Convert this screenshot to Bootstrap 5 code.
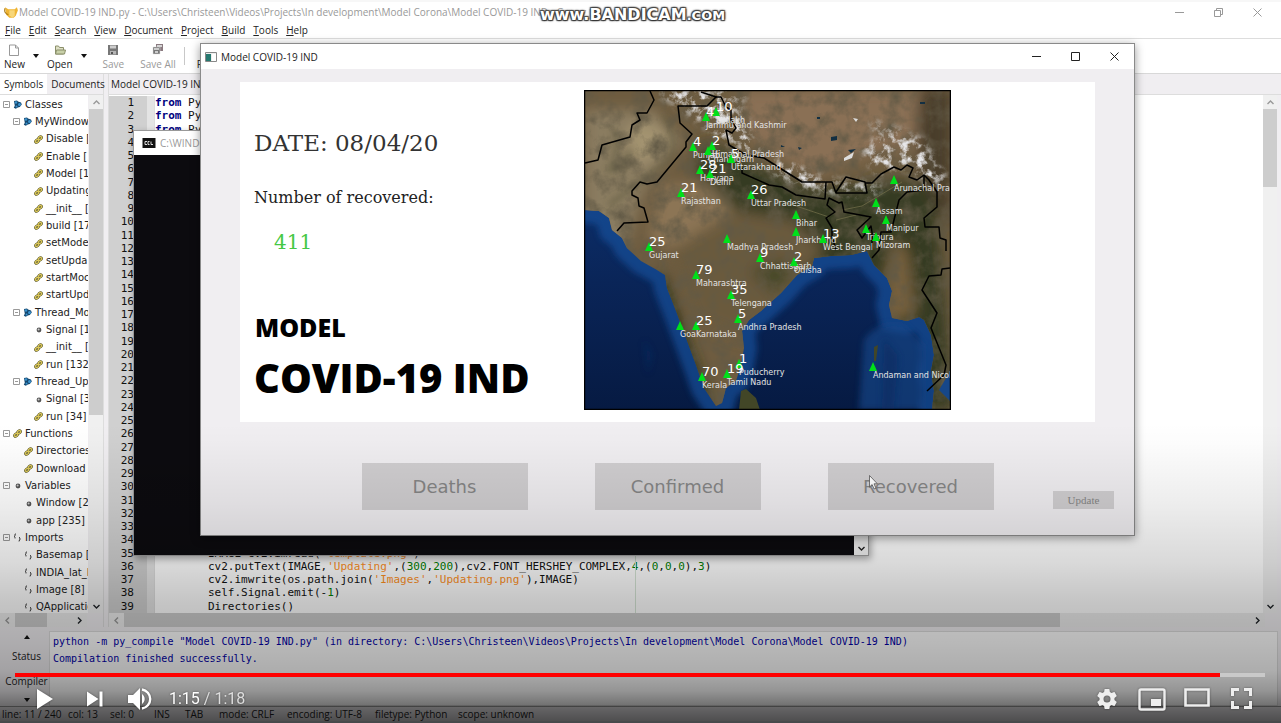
<!DOCTYPE html>
<html lang="en">
<head>
<meta charset="utf-8">
<meta name="viewport" content="width=device-width, initial-scale=1">
<title>Model COVID-19 IND</title>
<link rel="stylesheet" href="https://cdn.jsdelivr.net/npm/bootstrap@5.3.0/dist/css/bootstrap.min.css">
<style>
  :root { --ui: "Open Sans", "Noto Sans", sans-serif; --mono: "DejaVu Sans Mono", monospace; --chrome: #f0eef1; }
  body { font: 10px/14px var(--ui); color: #222; background: #fff; }
  button { font: inherit; color: inherit; background: none; border: 0; padding: 0; }
  svg { display: block; flex: none; }
  .stage { height: 100vh; min-height: 600px; }
  .faded { color: #999; }

  /* editor frame */
  .title-row { height: 22px; border-top: 2px solid #f7f7f7; }
  .menu-row { height: 17px; border-bottom: 1px solid #ddd; gap: 8px; padding-left: 5px; }
  .tool-row { height: 35px; border-bottom: 1px solid #d8d8d8; }
  .tool { display: flex; flex-direction: column; align-items: center; gap: 1px; line-height: 12px; }
  .tool svg { height: 14px; }
  .caret { border: 3px solid transparent; border-top: 4px solid #111; border-bottom: 0; height: 4px; }
  .caret.up { border-top: 0; border-bottom: 4px solid #111; }
  .work { background: var(--chrome); min-height: 0; }
  .side { width: 104px; border-right: 1px solid #ddd; }
  .tab-row { height: 21px; border-bottom: 1px solid #ddd; }
  .side-tab { height: 20px; padding: 0 4px; white-space: nowrap; }
  .side-tab.on { background: #fff; }
  .tree { width: 88px; padding-top: 1px; margin-bottom: -3px; font: 10px/14px "DejaVu Sans", sans-serif; white-space: nowrap; background: #fff; }
  .twig { gap: 3px; min-height: 0; }
  .lvl0 { padding-left: 3px; } .lvl1 { padding-left: 13px; } .lvl2 { padding-left: 34px; } .leaf1 { padding-left: 24px; }
  .vbar { width: 14px; background: #f0f0f0; }
  .vbar .knob { background: #cdcdcd; }
  .hbar { height: 14px; background: #eee; }
  .hbar .knob { background: #cdcdcd; }
  .arrow-box { width: 15px; height: 14px; display: flex; align-items: center; justify-content: center; }
  .doc { margin-left: 4px; border-left: 1px solid #ddd; }
  .doc .tab-row { padding-left: 2px; }
  .code { padding-top: 1px; font: 11px/13px var(--mono); background: #fff; color: #111; }
  .gutter { width: 38px; background: #d0d0d0; text-align: right; padding-right: 13px; }
  .fold { width: 8px; background: #e4e4e4; border-right: 1px solid #ddd; }
  .code-line { flex: 1 1 0; min-height: 0; display: flex; align-items: center; white-space: pre; }
  .gutter .code-line { justify-content: flex-end; }
  .edge-col { left: 526px; width: 1px; background: #d5e5d5; }
  .kw { color: #00007f; font-weight: bold; } .str { color: #ff901e; } .num { color: #007f00; }
  .msg { background: var(--chrome); height: 79px; padding-top: 4px; }
  .msg-tabs { width: 49px; }
  .msg-text { font: 10px/17px var(--mono); color: #0000a8; background: #fff; border: 1px solid #ddd; padding: 1px 3px; margin-right: 3px; white-space: pre; }
  .status-row { height: 17px; background: var(--chrome); border-top: 1px solid #999; border-bottom: 2px solid #dde3e8; display: grid; grid-template-columns: 66px 42px 44px 31px 34px 68px 88px 83px auto; padding-left: 2px; white-space: nowrap; line-height: 15px; }

  /* floating windows */
  .console { left: 133px; top: 130px; width: 736px; height: 426px; background: #fff; border: 1px solid #999; box-shadow: 2px 3px 7px #0005; }
  .console-screen { background: #0c0b0f; }
  .app { left: 200px; top: 43px; width: 935px; height: 493px; background: var(--chrome); border: 1px solid #8a8a8a; box-shadow: 0 2px 9px #0006; color: #222; }
  .app-title { height: 25px; background: #fff; line-height: 12px; }
  .sys { width: 39px; display: flex; justify-content: center; }
  .board { margin: 13px 39px 0; height: 340px; background: #fff; }
  .facts { width: 344px; padding-left: 14px; font-family: "DejaVu Serif", serif; color: #222; }
  .date { font-size: 23px; line-height: 24px; margin-top: 49px; color: #333; }
  .what { font-size: 16px; line-height: 20px; margin-top: 33px; }
  .count { font-size: 20px; line-height: 24px; margin-top: 22px; padding-left: 20px; color: #45c845; }
  .brand-a { font: 800 25px/30px "Open Sans", sans-serif; color: #000; margin-top: 58px; padding-left: 1px; }
  .brand-b { font: 800 40px/48px "Open Sans", sans-serif; color: #000; margin-top: 12px; white-space: nowrap; }
  .map { width: 367px; height: 320px; margin-top: 8px; }
  .choices { gap: 67px; padding: 41px 0 0 20px; }
  .choice { width: 166px; height: 47px; background: #d0ced0; color: #858585; font: 18px/24px "DejaVu Sans", sans-serif; }
  .update { right: 20px; bottom: 26px; width: 61px; height: 18px; background: #d0ced0; color: #858585; font: 11px/18px "Liberation Serif", serif; }
  .pointer { left: 869px; top: 475px; }
  .stamp { left: 540px; top: 6px; font: bold 16px/18px "DejaVu Sans", sans-serif; color: #fff; text-shadow: 1px 1px 1px #333, -1px -1px 1px #444, 1px -1px 1px #444, -1px 1px 1px #444, 0 0 3px #444; white-space: nowrap; }
  .stamp span { font-size: 13px; }

  /* video player */
  .shade { height: 300px; background: linear-gradient(to bottom, #0000 0, rgba(0,0,0,.01) 20px, rgba(0,0,0,.07) 80px, rgba(0,0,0,.15) 140px, rgba(0,0,0,.23) 180px, rgba(0,0,0,.28) 220px, rgba(0,0,0,.32) 248px, rgba(0,0,0,.42) 268px, rgba(0,0,0,.58) 285px, rgba(0,0,0,.68) 299px); }
  .player { color: #eee; padding: 0 16px 0 15px; }
  .track { height: 4px; border-radius: 0; background: #c9c9c9; }
  .track .progress-bar { background: #f00; }
  .keys { height: 46px; padding: 0 1px 2px; filter: drop-shadow(0 0 1px #0006); }
  .time { font: 16px/20px Roboto, sans-serif; margin-left: 17px; color: #ddd; }
  .time b { font-weight: 400; color: #fff; }
  .key { width: 45px; display: flex; justify-content: center; }
</style>
</head>
<body>
<svg width="0" height="0" class="position-absolute" aria-hidden="true">
  <defs>
    <symbol id="link" viewBox="0 0 9 9"><g fill="none" stroke="#4d4a18" stroke-width="2.2"><ellipse cx="3" cy="6" rx="1.9" ry="1.3" transform="rotate(-40 3 6)"/><ellipse cx="6" cy="3" rx="1.9" ry="1.3" transform="rotate(-40 6 3)"/></g><g fill="none" stroke="#e0cc5c" stroke-width="1.1"><ellipse cx="3" cy="6" rx="1.9" ry="1.3" transform="rotate(-40 3 6)"/><ellipse cx="6" cy="3" rx="1.9" ry="1.3" transform="rotate(-40 6 3)"/></g></symbol>
    <symbol id="class" viewBox="0 0 9 9"><path d="M1 1l3-.5 1 1 3 1 .8 2-2 2.500-2 .5-2 1.200-2-1 1-2z" fill="#15486f"/><circle cx="3" cy="2.500" r="1.200" fill="#3b94d0"/><circle cx="6.500" cy="4.500" r="1.500" fill="#3b94d0"/><circle cx="3.500" cy="6.500" r="1" fill="#3b94d0"/></symbol>
    <symbol id="dot" viewBox="0 0 9 9"><circle cx="5" cy="5" r="2.400" fill="#555"/><circle cx="4.600" cy="4.600" r="1" fill="#ccc"/></symbol>
    <symbol id="brace" viewBox="0 0 9 9"><path d="M3 1H2v2L1 3.500 2 4v1.500M6.500 4v1.500l1 .5-1 .5V8h-1" fill="none" stroke="#444" stroke-width=".9"/></symbol>
    <symbol id="min" viewBox="0 0 9 9"><path d="M0 4.500h9" stroke="currentColor"/></symbol>
    <symbol id="max" viewBox="0 0 9 9"><path d="M.5.5h8v8h-8z" fill="none" stroke="currentColor"/></symbol>
    <symbol id="restore" viewBox="0 0 9 9"><path d="M.5 2.500h6v6h-6zM2.500 2V.5h6v6H7" fill="none" stroke="currentColor"/></symbol>
    <symbol id="shut" viewBox="0 0 9 9"><path d="M.5.5l8 8M8.500.5l-8 8" stroke="currentColor"/></symbol>
    <symbol id="chev" viewBox="0 0 7 7"><path d="M.5 2l3 3 3-3" fill="none" stroke="currentColor" stroke-width="1.400"/></symbol>
  </defs>
</svg>

<div class="stage position-relative overflow-hidden d-flex flex-column">
  <header class="title-row d-flex align-items-center faded">
    <svg width="15" height="13" viewBox="0 0 14 12" class="ms-1"><path d="M1 1l3 2h6l2-2 1 3-2 5-2 2H5L2 8z" fill="#efb534"/><path d="M5 4h5v5l-2 2-3-2z" fill="#f8d778"/><path d="M1 2c-1 3 0 5 3 6" fill="none" stroke="#a97914"/></svg>
    <span class="text-nowrap">Model COVID-19 IND.py - C:\Users\Christeen\Videos\Projects\In development\Model Corona\Model COVID-19 IND - Geany</span>
    <div class="ms-auto d-flex me-1">
      <button class="sys" aria-label="Minimize"><svg width="9" height="9"><use href="#min"/></svg></button>
      <button class="sys" aria-label="Restore"><svg width="9" height="9"><use href="#restore"/></svg></button>
      <button class="sys" aria-label="Close"><svg width="9" height="9"><use href="#shut"/></svg></button>
    </div>
  </header>
  <nav class="menu-row d-flex align-items-center">
    <button><u>F</u>ile</button><button><u>E</u>dit</button><button><u>S</u>earch</button><button><u>V</u>iew</button><button><u>D</u>ocument</button><button><u>P</u>roject</button><button><u>B</u>uild</button><button><u>T</u>ools</button><button><u>H</u>elp</button>
  </nav>
  <div class="tool-row d-flex align-items-center px-1">
    <button class="tool"><svg width="12" height="14" viewBox="0 0 12 14"><path d="M1.500 2h6l3 3v7.500h-9zM7.500 2v3h3" fill="#fff" stroke="#999"/></svg>New</button>
    <span class="caret ms-2 me-2"></span>
    <button class="tool"><svg width="12" height="14" viewBox="0 0 12 14"><path d="M1.500 11V3h3l1 1.500h4V11z" fill="#dedfc5" stroke="#8a8f6a"/><path d="M1.500 11L2.500 7h9L10.500 11z" fill="#c8d0a8" stroke="#8a8f6a"/></svg>Open</button>
    <span class="caret ms-2 me-3"></span>
    <button class="tool faded"><svg width="12" height="14" viewBox="0 0 12 14"><path d="M1 2h10v10H1z" fill="#777"/><path d="M3 2.500h6v3H3z" fill="#ccc"/><path d="M3 8h6v3.500H3z" fill="#b5b5b5"/><path d="M4 9h2v2H4z" fill="#555"/></svg>Save</button>
    <button class="tool faded ms-3"><svg width="12" height="14" viewBox="0 0 12 14"><path d="M4 1h7v7H4z" fill="#8a7a80"/><path d="M5 2h5v2H5z" fill="#d5d5d5"/><path d="M1 4h7v7H1z" fill="#777" stroke="#ddd" stroke-width=".5"/><path d="M2 5h5v2H2zM3 8h3v2H3z" fill="#ccc"/></svg>Save All</button>
    <span class="vr ms-2 my-2"></span>
    <button class="tool ms-2 ps-1"><svg width="12" height="14" viewBox="0 0 12 14"><path d="M2 5a4 4 0 1 1 0 4" fill="none" stroke="#a33" stroke-width="2"/></svg>Revert</button>
  </div>

  <main class="work flex-grow-1 d-flex">
    <aside class="side d-flex flex-column">
      <div class="tab-row d-flex align-items-center">
        <button class="side-tab on">Symbols</button><button class="side-tab ps-1 pe-0">Documents</button>
      </div>
      <div class="d-flex flex-grow-1 overflow-hidden">
        <div class="tree d-flex flex-column overflow-hidden" id="tree"></div>
        <div class="vbar ms-auto d-flex flex-column faded">
          <div class="arrow-box"><svg width="7" height="7" style="transform:rotate(180deg)"><use href="#chev"/></svg></div>
          <div class="knob" style="height:59%"></div>
          <div class="arrow-box mt-auto text-dark"><svg width="7" height="7"><use href="#chev"/></svg></div>
        </div>
      </div>
      <div class="hbar d-flex faded me-3">
        <div class="arrow-box"><svg width="7" height="7" style="transform:rotate(90deg)"><use href="#chev"/></svg></div>
        <div class="knob" style="width:37%"></div>
        <div class="arrow-box ms-auto text-dark"><svg width="7" height="7" style="transform:rotate(-90deg)"><use href="#chev"/></svg></div>
      </div>
    </aside>
    <section class="doc flex-grow-1 d-flex flex-column">
      <div class="tab-row d-flex align-items-center text-nowrap"><button>Model COVID-19 IND.py</button></div>
      <div class="flex-grow-1 d-flex overflow-hidden me-1">
        <div class="code flex-grow-1 d-flex position-relative">
          <div class="gutter d-flex flex-column" id="numbers"></div>
          <div class="fold"></div>
          <div class="flex-grow-1 d-flex flex-column" id="code"></div>
          <div class="edge-col position-absolute top-0 bottom-0"></div>
        </div>
        <div class="vbar d-flex flex-column faded">
          <div class="arrow-box"><svg width="7" height="7" style="transform:rotate(180deg)"><use href="#chev"/></svg></div>
          <div class="knob" style="height:15%"></div>
          <div class="arrow-box mt-auto text-dark"><svg width="7" height="7"><use href="#chev"/></svg></div>
        </div>
      </div>
      <div class="hbar d-flex faded me-3">
        <div class="arrow-box"><svg width="7" height="7" style="transform:rotate(90deg)"><use href="#chev"/></svg></div>
        <div class="knob" style="width:81%"></div>
        <div class="arrow-box ms-auto text-dark"><svg width="7" height="7" style="transform:rotate(-90deg)"><use href="#chev"/></svg></div>
      </div>
    </section>
  </main>

  <section class="msg d-flex">
    <div class="msg-tabs d-flex flex-column align-items-center justify-content-between pb-1 ps-1 text-nowrap">
      <span class="caret up mt-1"></span><button>Status</button><button>Compiler</button><span class="caret"></span>
    </div>
    <div class="msg-text flex-grow-1 overflow-hidden">python -m py_compile "Model COVID-19 IND.py" (in directory: C:\Users\Christeen\Videos\Projects\In development\Model Corona\Model COVID-19 IND)
Compilation finished successfully.</div>
  </section>
  <footer class="status-row"><span>line: 11 / 240</span><span>col: 13</span><span>sel: 0</span><span>INS</span><span>TAB</span><span>mode: CRLF</span><span>encoding: UTF-8</span><span>filetype: Python</span><span>scope: unknown</span></footer>

  <div class="console position-absolute d-flex flex-column">
    <div class="d-flex align-items-center faded ps-1" style="height:24px"><svg width="14" height="10" class="me-1 ms-1" viewBox="0 0 13 10"><path d="M0 0h13v10H0z" fill="#111"/><path d="M4.500 3.500h-2v3h2M7 3.500H5.500v3H7M8.500 3.500v3h2" fill="none" stroke="#ddd"/></svg>C:\WINDOWS\py.exe</div>
    <div class="flex-grow-1 d-flex">
      <div class="console-screen flex-grow-1"></div>
      <div class="vbar d-flex flex-column"><div class="arrow-box mt-auto"><svg width="7" height="7"><use href="#chev"/></svg></div></div>
    </div>
  </div>

  <div class="app position-absolute">
    <div class="app-title d-flex align-items-center">
      <svg width="12" height="10" viewBox="0 0 12 10" class="ms-1 me-1"><path d="M.5.500h11v9H.5z" fill="#eee" stroke="#888"/><path d="M1 2h5v7H1z" fill="#26786f"/><path d="M7 2h4v7H7z" fill="#fff"/></svg>
      <span>Model COVID-19 IND</span>
      <div class="ms-auto d-flex">
        <button class="sys" aria-label="Minimize"><svg width="9" height="9"><use href="#min"/></svg></button>
        <button class="sys" aria-label="Maximize"><svg width="9" height="9"><use href="#max"/></svg></button>
        <button class="sys" aria-label="Close"><svg width="9" height="9"><use href="#shut"/></svg></button>
      </div>
    </div>
    <div class="board d-flex">
      <div class="facts">
        <div class="date">DATE: 08/04/20</div>
        <div class="what text-nowrap">Number of recovered:</div>
        <div class="count">411</div>
        <div class="brand-a">MODEL</div>
        <div class="brand-b">COVID-19 IND</div>
      </div>
      <svg class="map" viewBox="0 0 367 320" preserveAspectRatio="none" role="img" aria-label="Map of India">
        <defs>
          <clipPath id="frame"><path d="M0 0h367v320H0z"/></clipPath>
          <filter id="soft" x="-20%" y="-20%" width="140%" height="140%"><feGaussianBlur stdDeviation="7"/></filter>
          <filter id="soft2" x="-20%" y="-20%" width="140%" height="140%"><feGaussianBlur stdDeviation="3"/></filter>
          <filter id="grain" x="0" y="0" width="100%" height="100%"><feTurbulence type="fractalNoise" baseFrequency=".06" numOctaves="5" seed="4"/><feColorMatrix values="0 0 0 0 .12  0 0 0 0 .1  0 0 0 0 .06  2 0 0 0 -.8"/></filter>
          <filter id="snow" x="-20%" y="-20%" width="140%" height="140%"><feGaussianBlur in="SourceAlpha" stdDeviation="4" result="a"/><feTurbulence type="fractalNoise" baseFrequency=".12" numOctaves="5" seed="9"/><feColorMatrix values="0 0 0 0 .8  0 0 0 0 .8  0 0 0 0 .82  0 3.500 0 0 -1.600"/><feComposite in2="a" operator="in"/></filter>
          <linearGradient id="sea" x1="0" y1="0" x2="0" y2="1"><stop offset="0" stop-color="#0f3b80"/><stop offset=".6" stop-color="#0a2558"/><stop offset="1" stop-color="#061a42"/></linearGradient>
          <path id="land" d="M0 120L15 121 25 128 28 140 38 148 43 158 57 171 73 180 81 185 83 198 92 221 102 248 112 275 120 298 132 316 138 313 142 298 152 291 157 275 160 258 158 241 165 230 177 221 197 203 213 185 228 176 230 168 247 166 267 165 283 161 290 175 303 188 308 201 305 215 308 228 323 231 335 227 340 230 347 245 350 265 347 281 350 301 348 320H367V0H0z"/>
          <clipPath id="onland"><use href="#land"/></clipPath>
        </defs>
        <g clip-path="url(#frame)">
          <path d="M0 0h367v320H0z" fill="url(#sea)"/>
          <use href="#land" fill="none" stroke="#17509a" stroke-width="26" filter="url(#soft2)" opacity=".7"/>
          <path d="M280 250q14-20 40-15l20 20v65h-65z" fill="#164789" opacity=".65" filter="url(#soft2)"/>
          <path d="M300 248l14 18-4 54h-12zM60 250l8 14-4 20zM75 275l6 10" fill="#0a2b60" opacity=".6" filter="url(#soft2)"/>
          <g clip-path="url(#onland)">
            <path d="M0 0h367v320H0z" fill="#6e5c40"/>
            <g filter="url(#soft)">
              <path d="M0 20h70l30 30-40 50-20 60H0z" fill="#8a7c60"/>
              <path d="M75 95h80l30 45-60 30-60-20z" fill="#8c7554"/>
              <path d="M155 0h212v65l-60-5-80 25-65-40z" fill="#8a7055"/>
              <path d="M120 50l50 25 60 25 80-10 40 5 20 225h-40l-20-100-30-40-40 10-40-20-50-50-40-40z" fill="#353b22"/>
              <path d="M150 120l60 10 30 30-50 60-30 30-50-20-25-70z" fill="#6b5a3e"/>
              <path d="M310 150l14 10 8 65-24 4-8-40z" fill="#77613d"/>
              <path d="M80 180l20 60 30 80-30-20-30-100z" fill="#2a3019"/>
              <path d="M335 0h32v140l-25-40-10-50z" fill="#4a3e29"/>
              <path d="M165 180l30-10 20 10-25 25z" fill="#48492b"/>
              <path d="M45 35q30-10 40 15l-25 25q-20-5-15-40z" fill="#a3936f"/>
            </g>
            <path d="M30 40q8 20-5 40 15 0 22-20M80 25q15 30 5 45l-60 45" fill="none" stroke="#4c4b32" stroke-width="4" opacity=".5" filter="url(#soft2)"/>
            <path d="M0 0h367v320H0z" filter="url(#grain)"/>
            <path d="M70 0h70l22 28 10 35-32-12-30-25zM195 68l45 22 60 5-10 10-60-4-45-20zM278 60l30-22 30 12 25 40-12 8-30-22-28 8z" filter="url(#snow)"/>
            <path d="M95 5l32 10 22 30 24 18M200 78l28 16M300 48q35 0 48 42M140 3l18 5M290 35l10 6" fill="none" stroke="#ddd" stroke-width="7" stroke-linecap="round" filter="url(#snow)"/>
            <path d="M247 47l6-1v4l-6 1zM264 60l8-1-5 4zM214 57l4 1-3 2zM336 12h5v2h-5zM197 55l4 2h-4zM233 27h3v2h-3z" fill="#132f42"/>
            <path d="M260 68l10-6-2 6-8 3zM269 28l5 1-2 3z" fill="#ddd"/>
            <path d="M258 120l20-4 20-12 20-12M200 112l45 15M252 130l20-5" fill="none" stroke="#75704c" opacity=".7"/>
            <path d="M355 300l12-20v32z" fill="#164789"/>
          </g>
          <path d="M157 301l5-2 10 9 4 12h-21zM290 257l4-2-2 16h-2z" fill="#424627"/>
          <g fill="none" stroke="#000" stroke-width="1.500" stroke-linejoin="round">
            <path d="M66 1l4 9-7 13H53l3 7-8 5-2 12-28 8-4 15-13 3"/>
            <path d="M117 2l15 5-9 9H94l2 17 12 11-6 8v5L73 92l-10 2-7-2-8 9v4l6 3 1 8 5 2 4 14-24 1-7 8"/>
            <path d="M132 7l5 0 5 10 5 3v10l5 8-4 5-6-3 3 15 17 10 18 3 38 24h30l4 11h31l-2-11-19-5-10 15M281 93h7l9-9 13-7 7 3 6-5 6 3-4 9 8 3 7-5 5 5 8 12v15l-13 11 1 9h14l1 11 6 2v11"/>
            <path d="M158 78v5l27 12 13 2 14 8 29 4 1-17"/>
            <path d="M252 160l-4-13v-9l-6-10 9-6-8-7 2-7 10 5 3-1 2 10 27 5-14 13 5 8 9-12 1 6v18"/>
            <path d="M340 85v15l-17 2-8 8-8 32h-10l-2 18-7 8M366 178l-8 1-1 6-12 1-7 14 15 23-6 15 15 37-2 10-17 16"/>
          </g>
          <g id="pins"></g>
        </g>
        <path d="M.5.500h366v319H.5z" fill="none" stroke="#000" stroke-width="1.500"/>
      </svg>
    </div>
    <div class="choices d-flex justify-content-center">
      <button class="choice">Deaths</button><button class="choice">Confirmed</button><button class="choice">Recovered</button>
    </div>
    <button class="update position-absolute">Update</button>
  </div>

  <svg class="pointer position-absolute" width="9" height="15" viewBox="0 0 9 15"><path d="M.5.500v11.500l2.600-2.400 2 4.400 1.900-.8-2-4.400h3.400z" fill="#fff" stroke="#555" stroke-width=".8"/></svg>
  <div class="stamp position-absolute">www.BANDICAM<span>.COM</span></div>
  <div class="shade position-absolute start-0 end-0 bottom-0 pe-none"></div>

  <div class="player position-absolute start-0 end-0 bottom-0">
    <div class="progress track" role="progressbar" aria-label="Playback" aria-valuenow="96" aria-valuemin="0" aria-valuemax="100"><div class="progress-bar" style="width:96.4%"></div></div>
    <div class="keys d-flex align-items-center">
      <button class="ms-3 ps-1" aria-label="Play"><svg width="18" height="22" viewBox="0 0 18 22"><path d="M1 1v20l16-10z" fill="#fff"/></svg></button>
      <button class="ms-4 ps-2" aria-label="Next"><svg width="18" height="18" viewBox="0 0 18 18"><path d="M1 1.500v15L12.500 9zM13.500 1.500h3v15h-3z" fill="#fff"/></svg></button>
      <button class="ms-4" aria-label="Mute"><svg width="24" height="22" viewBox="0 0 24 22"><path d="M0 7v8h5l7 7V0L5 7zM14 6v10a6 6 0 0 0 0-10z" fill="#fff"/><path d="M14 1.500a9.600 9.600 0 0 1 0 19" fill="none" stroke="#fff" stroke-width="2.400"/></svg></button>
      <span class="time"><b>1:15</b> / 1:18</span>
      <div class="ms-auto d-flex">
        <button class="key" aria-label="Settings"><svg width="20" height="22" viewBox="2 1 20 22"><path fill="#eee" d="M19.430 12.980c.04-.32.070-.64.070-.98s-.03-.66-.07-.98l2.110-1.650c.19-.15.240-.42.120-.64l-2-3.460c-.12-.22-.39-.3-.61-.22l-2.490 1c-.52-.4-1.080-.73-1.690-.98l-.38-2.650A.49.49 0 0 0 14 2h-4c-.25 0-.46.180-.49.420l-.38 2.650c-.61.250-1.170.590-1.690.980l-2.490-1c-.23-.09-.49 0-.61.220l-2 3.460c-.13.220-.07.490.120.640l2.110 1.650c-.04.320-.07.650-.07.980s.030.660.070.980l-2.110 1.650c-.19.150-.24.420-.12.640l2 3.460c.120.220.390.300.610.220l2.490-1c.520.400 1.080.730 1.690.980l.380 2.650c.030.240.240.420.490.420h4c.250 0 .460-.18.490-.42l.380-2.650c.610-.25 1.170-.59 1.690-.98l2.490 1c.230.090.490 0 .610-.22l2-3.460c.120-.22.070-.49-.12-.64zM12 15.500a3.500 3.500 0 1 1 0-7 3.500 3.500 0 0 1 0 7z"/></svg></button>
        <button class="key" aria-label="Miniplayer"><svg width="28" height="23" viewBox="0 0 28 23"><rect x="1.500" y="1.500" width="25" height="20" rx="1.500" fill="none" stroke="#eee" stroke-width="2.400"/><path d="M13 11h10v7H13z" fill="#eee"/></svg></button>
        <button class="key" aria-label="Theater mode"><svg width="26" height="19" viewBox="0 0 26 19"><path d="M1.500 1.500h23v16h-23z" fill="none" stroke="#eee" stroke-width="2.600"/></svg></button>
        <button class="key" aria-label="Full screen"><svg width="21" height="21" viewBox="0 0 21 21"><path d="M1.500 8V1.500H8M13 1.500h6.500V8M19.500 13v6.500H13M8 19.500H1.500V13" fill="none" stroke="#eee" stroke-width="3"/></svg></button>
      </div>
    </div>
  </div>
</div>

<script src="https://cdn.jsdelivr.net/npm/bootstrap@5.3.0/dist/js/bootstrap.bundle.min.js"></script>
<script>
  // symbol tree: level class, icon, label, expandable
  const tree = [
    ['lvl0', 'class', 'Classes', 1], ['lvl1', 'class', 'MyWindow', 1],
    ...['Disable [', 'Enable [1', 'Model [1', 'Updating', '__init__ [', 'build [17', 'setMode', 'setUpda', 'startMoc', 'startUpd'].map(t => ['lvl2', 'link', t]),
    ['lvl1', 'class', 'Thread_Mo', 1], ['lvl2', 'dot', 'Signal [1'], ['lvl2', 'link', '__init__ ['], ['lvl2', 'link', 'run [132'],
    ['lvl1', 'class', 'Thread_Up', 1], ['lvl2', 'dot', 'Signal [3'], ['lvl2', 'link', 'run [34]'],
    ['lvl0', 'link', 'Functions', 1], ['leaf1', 'link', 'Directories'], ['leaf1', 'link', 'Download ['],
    ['lvl0', 'dot', 'Variables', 1], ['leaf1', 'dot', 'Window [2'], ['leaf1', 'dot', 'app [235]'],
    ['lvl0', 'brace', 'Imports', 1], ['leaf1', 'brace', 'Basemap ['], ['leaf1', 'brace', 'INDIA_lat_lo'], ['leaf1', 'brace', 'Image [8]'], ['leaf1', 'brace', 'QApplicatio']];
  document.getElementById('tree').innerHTML = tree.map(([lvl, icon, label, open]) =>
    `<div class="twig flex-fill d-flex align-items-center ${lvl}">` +
    (open ? '<svg width="7" height="7" viewBox="0 0 7 7"><path d="M.5.5h6v6h-6zM2 3.500h3" fill="none" stroke="#999"/></svg>' : '') +
    `<svg width="9" height="9"><use href="#${icon}"/></svg><span>${label}</span></div>`).join('');

  // visible source lines
  const src = {
    1: '<span class="kw">from</span> PyQt5.QtWidgets', 2: '<span class="kw">from</span> PyQt5.QtGui', 3: '<span class="kw">from</span> PyQt5.QtCore',
    35: '        IMAGE=cv2.imread(<span class="str">\'template.png\'</span>)',
    36: '        cv2.putText(IMAGE,<span class="str">\'Updating\'</span>,(<span class="num">300</span>,<span class="num">200</span>),cv2.FONT_HERSHEY_COMPLEX,<span class="num">4</span>,(<span class="num">0</span>,<span class="num">0</span>,<span class="num">0</span>),<span class="num">3</span>)',
    37: '        cv2.imwrite(os.path.join(<span class="str">\'Images\'</span>,<span class="str">\'Updating.png\'</span>),IMAGE)',
    38: '        self.Signal.emit(-<span class="num">1</span>)', 39: '        Directories()' };
  let nums = '', code = '';
  for (let i = 1; i <= 39; i++) {
    nums += `<div class="code-line">${i}</div>`;
    code += `<div class="code-line">${src[i] || ''}</div>`;
  }
  document.getElementById('numbers').innerHTML = nums;
  document.getElementById('code').innerHTML = code;

  // map pins: x, y, state, recovered
  const pins = [[132,22,'Ladakh',10],[122,27,'Jammu and Kashmir',4],[109,57,'Punjab',4],[128,56,'Himachal Pradesh',2],[124,61,'Chandigarh'],
    [147,69,'Uttarakhand',5],[116,80,'Haryana',28],[126,84,'Delhi',21],[97,103,'Rajasthan',21],[167,105,'Uttar Pradesh',26],[212,125,'Bihar'],
    [212,142,'Jharkhand'],[239,149,'West Bengal',13],[310,90,'Arunachal Pradesh'],[292,113,'Assam'],[302,130,'Manipur'],[282,139,'Tripura'],
    [292,147,'Mizoram'],[65,157,'Gujarat',25],[143,149,'Madhya Pradesh'],[176,168,'Chhattisgarh',9],[210,172,'Odisha',2],[112,185,'Maharashtra',79],
    [147,205,'Telengana',35],[96,236,'Goa'],[112,236,'Karnataka',25],[154,229,'Andhra Pradesh',5],[155,274,'Puducherry',1],[143,284,'Tamil Nadu',19],
    [118,287,'Kerala',70],[289,277,'Andaman and Nicobar']];
  document.getElementById('pins').innerHTML = pins.map(([x, y, name, n]) =>
    `<path d="M${x} ${y - 5}l4 9h-8z" fill="#00e01a"/>` +
    `<text x="${x}" y="${y + 11}" font-family="DejaVu Sans" font-size="8" fill="#e4e4e4">${name}</text>` +
    (n ? `<text x="${x}" y="${y - 1}" font-family="DejaVu Sans" font-size="13" fill="#fff">${n}</text>` : '')).join('');
</script>
</body>
</html>
